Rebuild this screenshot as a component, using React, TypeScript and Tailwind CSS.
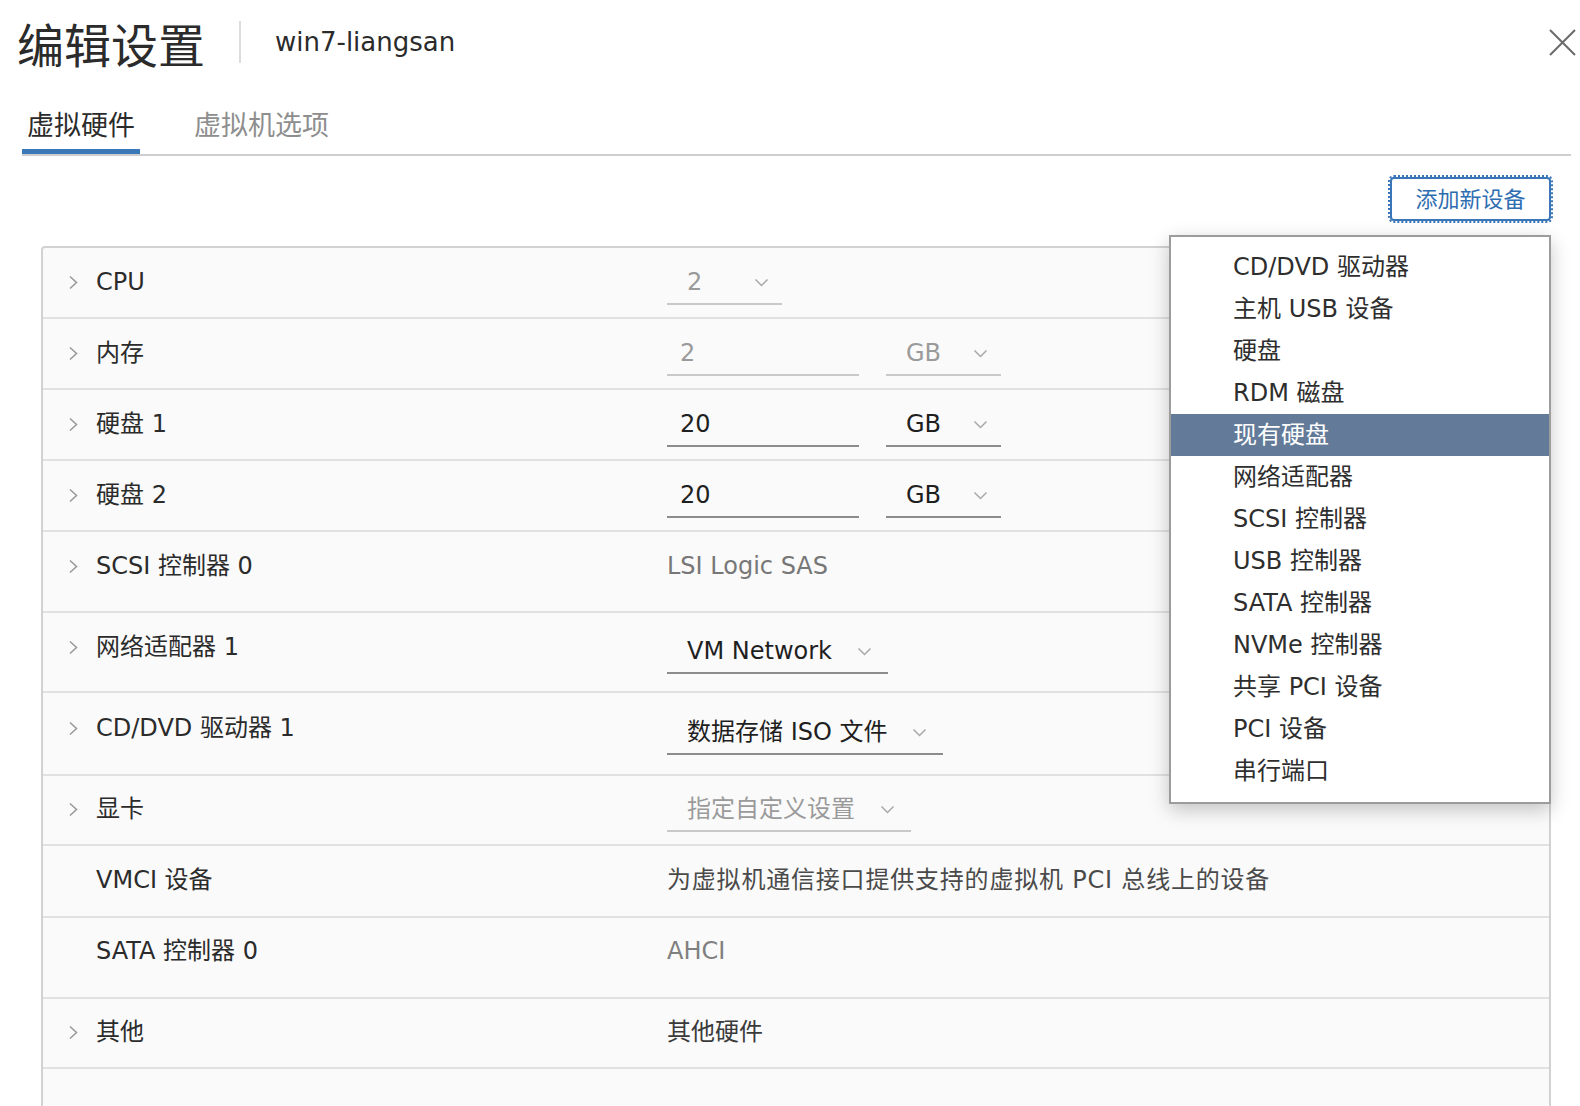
import type { ReactNode } from 'react';

const menuItems = [
  'CD/DVD 驱动器',
  '主机 USB 设备',
  '硬盘',
  'RDM 磁盘',
  '现有硬盘',
  '网络适配器',
  'SCSI 控制器',
  'USB 控制器',
  'SATA 控制器',
  'NVMe 控制器',
  '共享 PCI 设备',
  'PCI 设备',
  '串行端口',
];

const ChevronRight = () => (
  <svg width="11" height="15" viewBox="0 0 11 15" className="shrink-0">
    <polyline points="2,1.5 8.5,7.5 2,13.5" fill="none" stroke="#9a9a9a" strokeWidth="1.6" />
  </svg>
);

const ChevronDown = ({ className = '' }: { className?: string }) => (
  <svg width="15" height="9" viewBox="0 0 15 9" className={`shrink-0 ${className}`}>
    <polyline points="1.5,1.5 7.5,7.5 13.5,1.5" fill="none" stroke="#a8a8a8" strokeWidth="1.5" />
  </svg>
);

type SelectProps = { text: string; disabled?: boolean; w?: string };

function Select({ text, disabled, w }: SelectProps) {
  return (
    <div
      className={`flex items-center border-b-2 pb-[3px] pl-[20px] ${w ? `${w} justify-between pr-[13px]` : 'w-fit pr-[16px]'} ${
        disabled ? 'border-[#c9c9c9] text-[#9a9a9a]' : 'border-[#8c8c8c] text-[#1f1f1f]'
      }`}
    >
      <span className="text-[24px] leading-[36px]">{text}</span>
      <ChevronDown className={w ? '' : 'ml-[25px]'} />
    </div>
  );
}

function SizeInput({ value, disabled }: { value: string; disabled?: boolean }) {
  return (
    <div className="flex items-start gap-[27px]">
      <div
        className={`w-[192px] border-b-2 pb-[3px] pl-[13px] text-[24px] leading-[36px] ${
          disabled ? 'border-[#c9c9c9] text-[#9a9a9a]' : 'border-[#8c8c8c] text-[#1f1f1f]'
        }`}
      >
        {value}
      </div>
      <Select text="GB" disabled={disabled} w="w-[115px]" />
    </div>
  );
}

type RowProps = {
  label: string;
  chevron?: boolean;
  h: string;
  pt?: string;
  vpt?: string;
  children?: ReactNode;
};

function Row({ label, chevron = true, h, pt = 'pt-[16px]', vpt = 'pt-[16px]', children }: RowProps) {
  return (
    <div className={`flex shrink-0 border-b-2 border-[#e1e1e1] ${h}`}>
      <div className={`w-[624px] shrink-0 pl-[25px] ${pt}`}>
        <div className="flex h-[36px] items-center">
          {chevron ? <ChevronRight /> : <span className="w-[11px]" />}
          <span className="ml-[17px] text-[24px] leading-[36px] text-[#2b2b2b]">{label}</span>
        </div>
      </div>
      <div className={vpt}>{children}</div>
    </div>
  );
}

const Plain = ({ children, color }: { children: ReactNode; color: string }) => (
  <span className={`block text-[24px] leading-[36px] ${color}`}>{children}</span>
);

export default function App() {
  return (
    <div className="relative flex h-[1106px] w-[1580px] flex-col overflow-hidden bg-white font-['DejaVu_Sans','Noto_Sans_CJK_SC',sans-serif] text-[#333]">
      {/* 标题栏 */}
      <div className="flex h-[84px] shrink-0 items-center pl-[17px] pr-[4px]">
        <h1 className="font-['Noto_Sans_CJK_SC',sans-serif] text-[47px] leading-none text-[#2b2b2b]">编辑设置</h1>
        <div className="ml-[34px] h-[42px] w-[2px] bg-[#dcdcdc]" />
        <span className="ml-[34px] text-[26px] text-[#2b2b2b]">win7-liangsan</span>
        <button className="ml-auto">
          <svg width="27" height="27" viewBox="0 0 27 27">
            <path d="M1 1 L26 26 M26 1 L1 26" stroke="#6b6b6b" strokeWidth="2" />
          </svg>
        </button>
      </div>

      {/* 选项卡 */}
      <div className="ml-[22px] mr-[9px] flex shrink-0 border-b-2 border-[#cfcfcf] pt-[24px]">
        <div className="border-b-[5px] border-[#3b78b8] px-[5px] pb-[5px] text-[27px] leading-[36px] text-[#2b2b2b]">
          虚拟硬件
        </div>
        <div className="ml-[54px] pb-[10px] text-[27px] leading-[36px] text-[#8e8e8e]">虚拟机选项</div>
      </div>

      {/* 操作按钮 */}
      <div className="flex shrink-0 justify-end pr-[29px] pt-[21px]">
        <button className="h-[44px] w-[161px] rounded-[4px] border-2 border-[#3a76b7] text-[22px] text-[#2f6db1] outline-2 outline-dotted outline-[#3a76b7]">
          添加新设备
        </button>
      </div>

      {/* 硬件列表 */}
      <div className="ml-[41px] mt-[25px] flex w-[1510px] flex-1 flex-col rounded-t-[4px] border-2 border-b-0 border-[#d2d2d2] bg-[#fafafa]">
        <Row label="CPU" h="h-[71px]">
          <Select text="2" disabled w="w-[115px]" />
        </Row>
        <Row label="内存" h="h-[71px]">
          <SizeInput value="2" disabled />
        </Row>
        <Row label="硬盘 1" h="h-[71px]">
          <SizeInput value="20" />
        </Row>
        <Row label="硬盘 2" h="h-[71px]">
          <SizeInput value="20" />
        </Row>
        <Row label="SCSI 控制器 0" h="h-[81px]">
          <Plain color="text-[#777]">LSI Logic SAS</Plain>
        </Row>
        <Row label="网络适配器 1" h="h-[80px]" vpt="pt-[20px]">
          <Select text="VM Network" />
        </Row>
        <Row label="CD/DVD 驱动器 1" h="h-[83px]" pt="pt-[17px]" vpt="pt-[21px]">
          <Select text="数据存储 ISO 文件" />
        </Row>
        <Row label="显卡" h="h-[70px]" pt="pt-[15px]" vpt="pt-[15px]">
          <Select text="指定自定义设置" disabled />
        </Row>
        <Row label="VMCI 设备" chevron={false} h="h-[72px]">
          <Plain color="text-[#4a4a4a] tracking-[0.8px]">为虚拟机通信接口提供支持的虚拟机 PCI 总线上的设备</Plain>
        </Row>
        <Row label="SATA 控制器 0" chevron={false} h="h-[81px]" pt="pt-[15px]" vpt="pt-[15px]">
          <Plain color="text-[#808080]">AHCI</Plain>
        </Row>
        <Row label="其他" h="h-[70px]" pt="pt-[15px]" vpt="pt-[15px]">
          <Plain color="text-[#3a3a3a]">其他硬件</Plain>
        </Row>
      </div>

      {/* 添加新设备下拉菜单 */}
      <div className="absolute left-[1169px] top-[235px] w-[382px] border-2 border-[#9c9c9c] bg-white pb-[10px] pt-[9px] shadow-[0_6px_18px_rgba(0,0,0,0.22)]">
        {menuItems.map((item) => (
          <div
            key={item}
            className={`h-[42px] pl-[62px] text-[24px] leading-[42px] ${
              item === '现有硬盘' ? 'bg-[#637b99] text-white' : 'text-[#2e2e2e]'
            }`}
          >
            {item}
          </div>
        ))}
      </div>
    </div>
  );
}
